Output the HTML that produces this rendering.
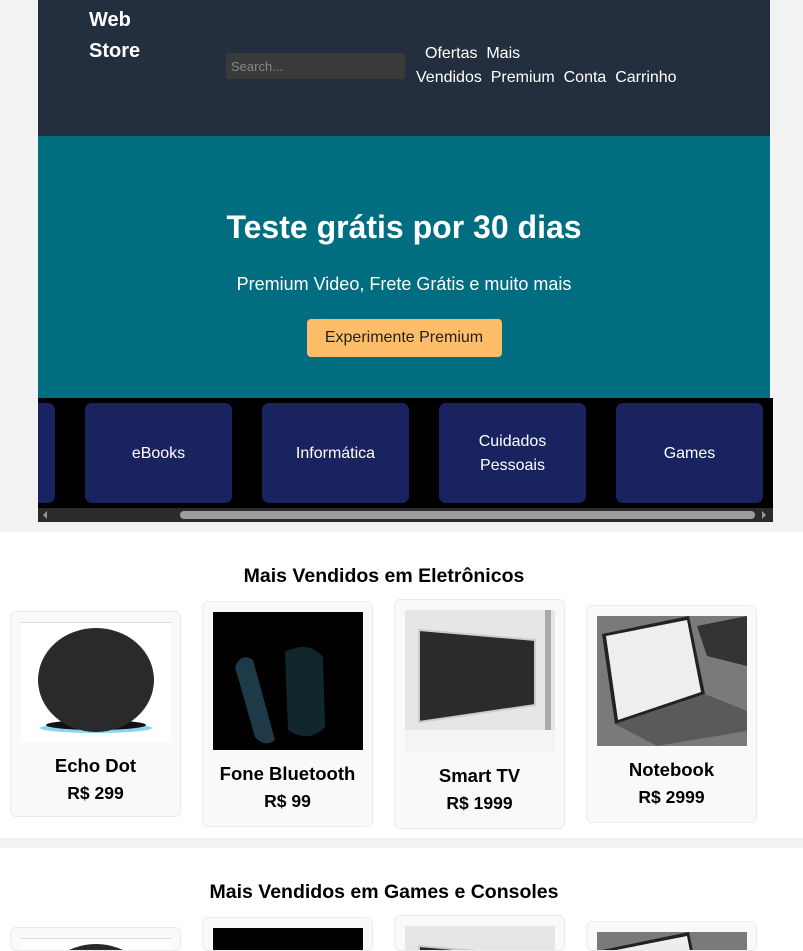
<!DOCTYPE html>
<html><head><meta charset="utf-8"><style>
*{margin:0;padding:0;box-sizing:border-box}
html,body{width:803px;height:951px;overflow:hidden}
body{background:#f2f2f2;font-family:"Liberation Sans",sans-serif;position:relative}
.a{position:absolute}
.hdr{left:38px;top:0;width:732px;height:136px;background:#232f3e}
.logo{left:89px;top:5px;color:#fff;font-weight:bold;font-size:20px;line-height:31px}
.search{left:226px;top:53px;width:179px;height:26px;background:#3a3a3a;border-radius:3px;color:#888;font-size:13px;padding:6px 5px}
.nav{color:#fff;font-size:16px;line-height:24px}
.hero{left:38px;top:136px;width:732px;height:262px;background:#006d80;color:#fff;text-align:center}
.strip{left:38px;top:398px;width:735px;height:124px;background:#000;overflow:hidden}
.cat{top:5px;width:147px;height:100px;background:#19235f;border-radius:7px;color:#fff;font-size:16px;display:flex;align-items:center;justify-content:center;text-align:center;line-height:24px;padding-top:2px}
.sb{left:0;top:110px;width:735px;height:14px;background:#2b2b2b}
.thumb{left:142px;top:3px;width:575px;height:8px;background:#9d9d9d;border-radius:4px}
.sec{left:0;width:803px;background:#fff}
.ttl{left:0;width:768px;text-align:center;font-weight:bold;font-size:19.5px}
.card{width:171px;background:#f9f9f9;border:1px solid #ececec;border-radius:6px;text-align:center;overflow:hidden}
.card svg{display:block;margin:10px auto 0}
.nm{font-weight:bold;font-size:18.5px;margin-top:13px;line-height:22px}
.pr{font-weight:bold;font-size:17.5px;line-height:22px;margin-top:5px}
</style></head><body>
<div class="a hdr"></div>
<div class="a logo">Web<br>Store</div>
<div class="a search">Search...</div>
<div class="a nav" style="left:425px;top:42px">Ofertas&nbsp; Mais</div>
<div class="a nav" style="left:416px;top:66px">Vendidos&nbsp; Premium&nbsp; Conta&nbsp; Carrinho</div>
<div class="a hero">
<div style="font-size:32px;font-weight:bold;margin-top:73px">Teste grátis por 30 dias</div>
<div style="font-size:18px;margin-top:28px">Premium Video, Frete Grátis e muito mais</div>
<div style="display:inline-block;margin-top:24px;background:#febd69;color:#222;font-size:16px;width:195px;height:38px;line-height:38px;border-radius:4px;">Experimente Premium</div>
</div>
<div class="a strip">
<div class="a cat" style="left:-130px"></div>
<div class="a cat" style="left:47px">eBooks</div>
<div class="a cat" style="left:224px">Informática</div>
<div class="a cat" style="left:401px">Cuidados<br>Pessoais</div>
<div class="a cat" style="left:578px">Games</div>
<div class="a sb"><div class="a thumb"></div>
<div class="a" style="left:5px;top:3px;width:0;height:0;border-top:4px solid transparent;border-bottom:4px solid transparent;border-right:4px solid #999"></div>
<div class="a" style="left:724px;top:3px;width:0;height:0;border-top:4px solid transparent;border-bottom:4px solid transparent;border-left:4px solid #999"></div></div>
</div>

<div class="a sec" style="top:532px;height:306px"></div>
<div class="a sec" style="top:848px;height:103px"></div>

<div class="a ttl" style="top:565px">Mais Vendidos em Eletrônicos</div>
<div class="a ttl" style="top:881px">Mais Vendidos em Games e Consoles</div>

<div class="a card" style="left:10px;top:611px;height:206px">
<svg width="150" height="120"><rect width="150" height="120" fill="#fff"/><rect width="150" height="1" fill="#ddd"/><ellipse cx="75" cy="106" rx="56" ry="5" fill="#3db8e8" opacity=".6"/><ellipse cx="75" cy="103" rx="50" ry="5" fill="#111"/><ellipse cx="75" cy="58" rx="58" ry="52" fill="#2a2a2c"/></svg>
<div class="nm">Echo Dot</div><div class="pr">R$ 299</div></div>

<div class="a card" style="left:202px;top:601px;height:226px">
<svg width="150" height="138"><rect width="150" height="138" fill="#000"/><path d="M22 55 Q28 40 40 48 L62 128 Q52 136 42 125 Z" fill="#1e3a48"/><path d="M72 40 Q95 28 110 45 L112 115 Q95 132 75 118 Z" fill="#12262e"/></svg>
<div class="nm">Fone Bluetooth</div><div class="pr">R$ 99</div></div>

<div class="a card" style="left:394px;top:599px;height:230px">
<svg width="150" height="142"><rect width="150" height="142" fill="#e6e6e6"/><rect x="140" y="0" width="6" height="120" fill="#aaa"/><path d="M14 20 L130 30 L130 95 L14 112 Z" fill="#2b2b2b" stroke="#ccc" stroke-width="2"/><rect x="0" y="120" width="150" height="22" fill="#f4f4f4"/></svg>
<div class="nm">Smart TV</div><div class="pr">R$ 1999</div></div>

<div class="a card" style="left:586px;top:605px;height:218px">
<svg width="150" height="130"><rect width="150" height="130" fill="#7a7a7a"/><path d="M5 18 L92 0 L108 78 L18 108 Z" fill="#222"/><path d="M9 20 L90 4 L104 76 L21 104 Z" fill="#eee"/><path d="M18 108 L108 78 L150 95 L150 115 L60 130 Z" fill="#5a5a5a"/><path d="M100 10 L150 0 L150 50 L110 40 Z" fill="#333"/></svg>
<div class="nm">Notebook</div><div class="pr">R$ 2999</div></div>

<div class="a card" style="left:10px;top:927px;height:24px">
<svg width="150" height="120"><rect width="150" height="120" fill="#fff"/><rect width="150" height="1" fill="#ddd"/><ellipse cx="75" cy="58" rx="58" ry="52" fill="#2a2a2c"/></svg></div>
<div class="a card" style="left:202px;top:917px;height:34px">
<svg width="150" height="138"><rect width="150" height="138" fill="#000"/></svg></div>
<div class="a card" style="left:394px;top:915px;height:36px">
<svg width="150" height="142"><rect width="150" height="142" fill="#e6e6e6"/><path d="M14 20 L130 30 L130 95 L14 112 Z" fill="#2b2b2b" stroke="#ccc" stroke-width="2"/></svg></div>
<div class="a card" style="left:586px;top:921px;height:30px">
<svg width="150" height="130"><rect width="150" height="130" fill="#7a7a7a"/><path d="M5 18 L92 0 L108 78 L18 108 Z" fill="#222"/><path d="M9 20 L90 4 L104 76 L21 104 Z" fill="#eee"/></svg></div>
</body></html>
